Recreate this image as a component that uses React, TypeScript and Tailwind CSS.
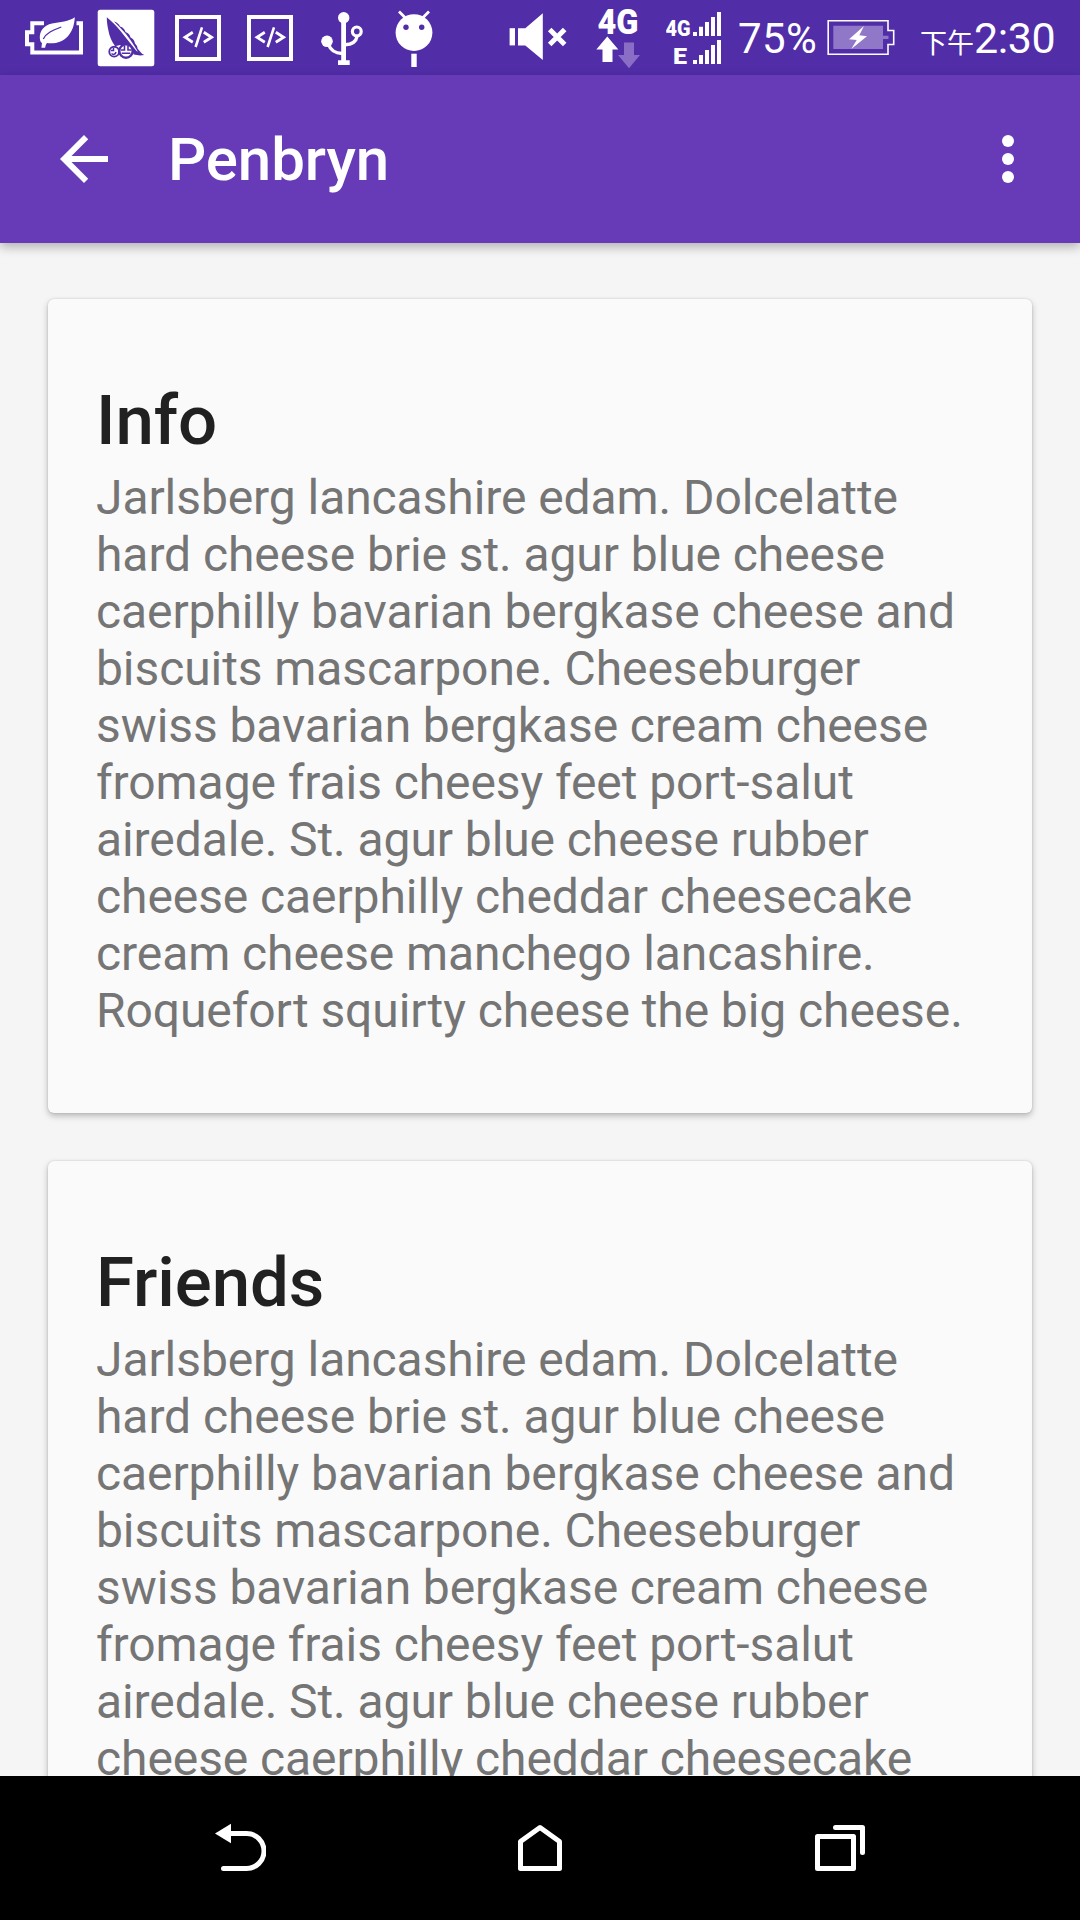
import React from 'react';

const BODY =
  'Jarlsberg lancashire edam. Dolcelatte hard cheese brie st. agur blue cheese caerphilly bavarian bergkase cheese and biscuits mascarpone. Cheeseburger swiss bavarian bergkase cream cheese fromage frais cheesy feet port-salut airedale. St. agur blue cheese rubber cheese caerphilly cheddar cheesecake cream cheese manchego lancashire. Roquefort squirty cheese the big cheese.';

function CodeIcon({ className }: { className: string }) {
  return (
    <svg className={className} width="46" height="75" viewBox="175 0 46 75" fill="none" stroke="#fff">
      <rect x="177" y="17" width="42" height="42" strokeWidth="4" />
      <path d="M192.8 32.3L185 37.3l7.8 5M203.8 32.3l7.8 5-7.8 5" strokeWidth="2.8" />
      <path d="M202 27.3L195.6 47" strokeWidth="2.6" />
    </svg>
  );
}

function StatusBar() {
  return (
    <div className="flex h-[75px] shrink-0 items-center bg-[#512da8] pl-[25px] text-white">
      <svg className="shrink-0" width="59" height="75" viewBox="25 0 59 75" fill="none">
        <path d="M44 23.3H32.3v8.9H27v12h5.3v8.3H81V23.3h-4.5" stroke="#fff" strokeWidth="4" />
        <path d="M74.8 17.2C69 21.5 60 22 52 23.5c-8 1.8-12.5 7.5-12.2 14.5.1 3 1.2 4.4 2.2 5l-.6 4.8h3.8c.2-2.3.8-3.6 1.8-4.7C64 45 74 34 74.8 17.2z" fill="#fff" stroke="#512da8" strokeWidth="3" paintOrder="stroke" />
        <path d="M43.3 39c3-6 9-8.5 18-12" stroke="#512da8" strokeWidth="1.3" />
      </svg>
      <svg className="ml-[13px] shrink-0" width="58" height="75" viewBox="97 0 58 75">
        <rect x="97.7" y="9.7" width="56.6" height="56.6" rx="2.5" fill="#fff" />
        <g fill="#512da8">
          <path d="M106.8 17.3c4.5 3.5 9.500 8.500 13.500 13.500l16 20 8 4.200c-4 .8-7 .4-10.500-.4-2-5-6-9-10-9.500-3.500-.5-6 .2-8.500 1.200-3.500-4.500-6-10-7-16.300-1-4.500-1.500-8.500-1.500-12.700z" />
          <path d="M114 21.5c3 1 5 2.500 6 5 3 .8 4.500 2.500 5.500 5.500 3 1 4.500 3 5 5.500 2.500 1 4 3 4.500 6 1.500 1.500 2.500 3 2.500 5l5.500 6.500-5-3c-4-7-8-13-12.500-18.500-3.500-4-7.500-8-11.500-12z" />
        </g>
        <g fill="#fff" stroke="#512da8">
          <circle cx="114.2" cy="51.7" r="4.9" strokeWidth="1.9" />
          <circle cx="126" cy="51" r="6.7" strokeWidth="2.4" />
        </g>
        <path d="M111 50.5h2.500v-2.500M111.500 53.500c1.500 1.500 4 1.200 4.500-1.500" stroke="#512da8" strokeWidth="1.5" fill="none" />
        <path d="M124.5 46v4h-3.500M128 46v4h3.500M121.800 53.200h8.500" stroke="#512da8" strokeWidth="1.6" fill="none" />
      </svg>
      <CodeIcon className="ml-[20px] shrink-0" />
      <CodeIcon className="ml-[26px] shrink-0" />
      <svg className="ml-[27px] shrink-0" width="44" height="75" viewBox="320 0 44 75" fill="#fff">
        <circle cx="343.7" cy="17.8" r="5.7" />
        <circle cx="327" cy="41.3" r="5.8" />
        <path d="M341.2 18h4.800v42.300h3.700V65H338v-4.700h3.200z" />
        <path d="M328.5 44.500c2 5.500 7 8.800 13.500 9M357 36.500c-.8 4.800-5 8-12 8.200" stroke="#fff" strokeWidth="3.4" fill="none" />
        <circle cx="356.8" cy="31.4" r="4.4" stroke="#fff" strokeWidth="3.2" fill="none" />
      </svg>
      <svg className="ml-[31px] shrink-0" width="38" height="75" viewBox="395 0 38 75">
        <path d="M399 11.500l6.500 6.500M429 11.500l-6.500 6.500" stroke="#fff" strokeWidth="2.8" />
        <circle cx="414" cy="32.6" r="18.4" fill="#fff" />
        <circle cx="406" cy="27.3" r="2.7" fill="#512da8" />
        <circle cx="421.7" cy="27.3" r="2.7" fill="#512da8" />
        <rect x="411.3" y="53.7" width="5.4" height="13.3" fill="#fff" />
      </svg>
      <svg className="ml-[76px] shrink-0" width="58" height="75" viewBox="509 0 58 75" fill="#fff">
        <rect x="509.6" y="28.2" width="5.4" height="17.2" />
        <path d="M518 28.200h7.300l17.500-15V60l-17.500-14.600H518z" />
        <path d="M549.7 29.500l15 15M564.700 29.500l-15 15" stroke="#fff" strokeWidth="5" />
      </svg>
      <svg className="ml-[29px] shrink-0" width="46" height="75" viewBox="596 0 46 75" fill="#fff">
        <text x="597.5" y="33.6" textLength="41" lengthAdjust="spacingAndGlyphs" className="font-[Roboto,sans-serif] text-[35.5px] font-black">4G</text>
        <path d="M607.3 36.500l11 13h-5.800V62h-10V49.500h-6.200z" />
        <path d="M624 42.500h10V55h6l-11 13.200L618 55h6z" fill="#8a6dc4" />
      </svg>
      <svg className="ml-[24px] shrink-0" width="56" height="75" viewBox="666 0 56 75" fill="#fff">
        <text x="665.5" y="35.8" textLength="25" lengthAdjust="spacingAndGlyphs" className="font-[Roboto,sans-serif] text-[22px] font-black">4G</text>
        <text x="673" y="64" textLength="14" lengthAdjust="spacingAndGlyphs" className="font-[Roboto,sans-serif] text-[22px] font-black">E</text>
        <path d="M693 32h4v4h-4zM699 26.700h4V36h-4zM705 22h4v14h-4zM711 17h4v19h-4zM717 12h4v24h-4z" />
        <path d="M693 60h4v4h-4zM699 55h4v9h-4zM705 50h4v14h-4zM711 45h4v19h-4zM717 40h4v24h-4z" />
      </svg>
      <span className="ml-[16px] w-[79px] shrink-0 pt-[3px] text-[42px] leading-[50px] tracking-[0.4px]">75%</span>
      <svg className="ml-[10px] shrink-0" width="68" height="75" viewBox="827 0 68 75">
        <path d="M828.2 20.700h59.800v9.800h5.700v14H888v9.800h-59.800z" fill="none" stroke="#fff" strokeWidth="1.6" />
        <path d="M833.3 25.700H883v10h5.500v3.400H883v10h-49.700z" fill="#9177c8" />
        <path d="M864 26l-15 13.300 7.700.7-5.400 9L867 36.200l-7.700-.9z" fill="#fff" />
      </svg>
      <span className="ml-[25px] flex shrink-0 items-baseline">
        <span className="font-['Noto_Sans_CJK_TC',sans-serif] text-[27px] font-normal leading-[40px]">下午</span>
        <span className="text-[43px] leading-[50px] tracking-[-0.4px]">2:30</span>
      </span>
    </div>
  );
}

function AppBar() {
  return (
    <header className="relative z-10 flex h-[168px] shrink-0 items-center bg-[#673ab7] pl-12 pr-9 text-white shadow-[0_4px_10px_rgba(0,0,0,0.28)]">
      <svg width="72" height="72" viewBox="0 0 24 24" fill="currentColor">
        <path d="M20 11H7.830l5.590-5.590L12 4l-8 8 8 8 1.410-1.410L7.830 13H20z" />
      </svg>
      <h1 className="ml-12 text-[60px] font-medium leading-[71px] tracking-[-0.1px]">Penbryn</h1>
      <svg className="ml-auto" width="72" height="72" viewBox="0 0 24 24" fill="currentColor">
        <circle cx="12" cy="6" r="2" />
        <circle cx="12" cy="12" r="2" />
        <circle cx="12" cy="18" r="2" />
      </svg>
    </header>
  );
}

function Card({ title }: { title: string }) {
  return (
    <section className="shrink-0 rounded-[6px] bg-[#fafafa] px-12 pb-[74px] pt-[81px] shadow-[0_3px_6px_rgba(0,0,0,0.25),0_0_2px_rgba(0,0,0,0.16)]">
      <h2 className="text-[69px] font-medium leading-[81px] tracking-[-0.1px] text-[#212121]">{title}</h2>
      <p className="mt-2 text-[48px] leading-[57px] tracking-[-0.085px] text-[#757575]">{BODY}</p>
    </section>
  );
}

function NavBar() {
  return (
    <nav className="flex h-36 shrink-0 items-center bg-black pl-[215px]">
      <svg width="51" height="144" viewBox="215 1776 51 144" fill="none">
        <path d="M215 1833.500l16-9.700v19.400z" fill="#fff" />
        <path d="M229 1833.500h17.500a17.500 17.500 0 0 1 0 35h-23" stroke="#fff" strokeWidth="5" strokeLinecap="round" />
      </svg>
      <svg className="ml-[252px]" width="44" height="144" viewBox="518 1776 44 144" fill="none">
        <path d="M520.5 1868.500v-27l19.500-14 19.500 14v27z" stroke="#fff" strokeWidth="5" strokeLinejoin="round" />
      </svg>
      <svg className="ml-[253px]" width="50" height="144" viewBox="815 1776 50 144" fill="none" stroke="#fff" strokeWidth="5" strokeLinejoin="round" strokeLinecap="round">
        <path d="M817.5 1836.500h36v32h-36zM835.500 1827.500h27v25" />
      </svg>
    </nav>
  );
}

export default function App() {
  return (
    <div className="flex h-[1920px] w-[1080px] flex-col overflow-hidden bg-[#f5f5f5] font-[Roboto,sans-serif]">
      <StatusBar />
      <AppBar />
      <main className="flex min-h-0 flex-1 flex-col gap-12 overflow-hidden px-12 pt-14">
        <Card title="Info" />
        <Card title="Friends" />
      </main>
      <NavBar />
    </div>
  );
}
